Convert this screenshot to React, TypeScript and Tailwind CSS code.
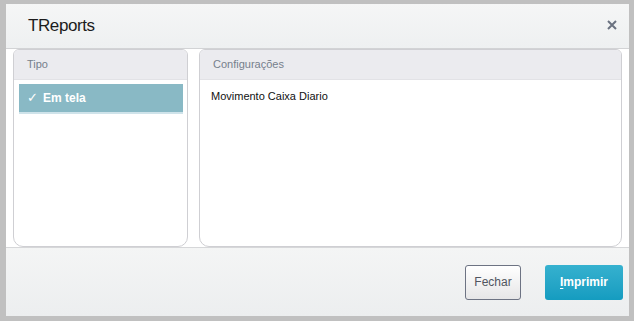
import React from 'react';

const font = { fontFamily: '"Liberation Sans", Arial, sans-serif' };

function Panel({ title, className, children }: { title: string; className: string; children?: React.ReactNode }) {
  return (
    <div className={`flex flex-col rounded-[6px] border border-[#cfcfd3] bg-white overflow-hidden ${className}`}>
      <div className="h-[30px] shrink-0 bg-[#ebebef] border-b border-[#e2e2e6] flex items-center pl-[13px] text-[11px] text-[#76808c]">
        {title}
      </div>
      <div className="flex-1">{children}</div>
    </div>
  );
}

export default function App() {
  return (
    <div className="w-[634px] h-[321px] bg-[#c0c0c0] pt-[4px] pl-[6px] pr-[5px] pb-[5px]" style={font}>
      <div className="w-full h-full flex flex-col bg-white">
        <div className="h-[45px] shrink-0 flex items-center justify-between pl-[22px] pr-[12px] bg-gradient-to-b from-[#f5f6f6] to-[#eef0f1] border-b border-[#d2d3d5]">
          <span className="text-[17px] text-[#1c1c1c] tracking-[-0.4px]">TReports</span>
          <svg width="10" height="10" viewBox="0 0 10 10" className="mb-[2px]">
            <path d="M1 1 L9 9 M9 1 L1 9" stroke="#6b7280" strokeWidth="2" />
          </svg>
        </div>
        <div className="flex-1 flex gap-[11px] px-[7px] min-h-0">
          <Panel title="Tipo" className="w-[175px] rounded-b-[10px]">
            <div className="pt-[4px] pl-[5px] pr-[4px]">
              <div className="h-[30px] bg-[#89b9c5] border-b-2 border-[#cfe3ea] flex items-center pl-[8px] text-[12px] font-bold text-white gap-[5px]">
                <span className="text-[13px] font-normal">✓</span>
                <span>Em tela</span>
              </div>
            </div>
          </Panel>
          <Panel title="Configurações" className="flex-1 rounded-b-[10px]">
            <div className="pl-[11px] pt-[8px] text-[11px] text-[#111]">Movimento Caixa Diario</div>
          </Panel>
        </div>
        <div className="h-[69px] shrink-0 border-t border-[#d6d7d9] bg-gradient-to-b from-[#f4f5f5] to-[#eceeef] flex items-center justify-end gap-[24px] pr-[6px]">
          <button className="w-[56px] h-[35px] rounded-[3px] border border-[#6d7383] bg-gradient-to-b from-[#ffffff] to-[#e6e6e7] text-[12px] text-[#505560]">
            Fechar
          </button>
          <button className="w-[78px] h-[35px] rounded-[3px] bg-gradient-to-b from-[#35b1cf] to-[#149cc0] text-[12px] font-bold text-white">
            <span className="underline underline-offset-2">I</span>mprimir
          </button>
        </div>
      </div>
    </div>
  );
}
